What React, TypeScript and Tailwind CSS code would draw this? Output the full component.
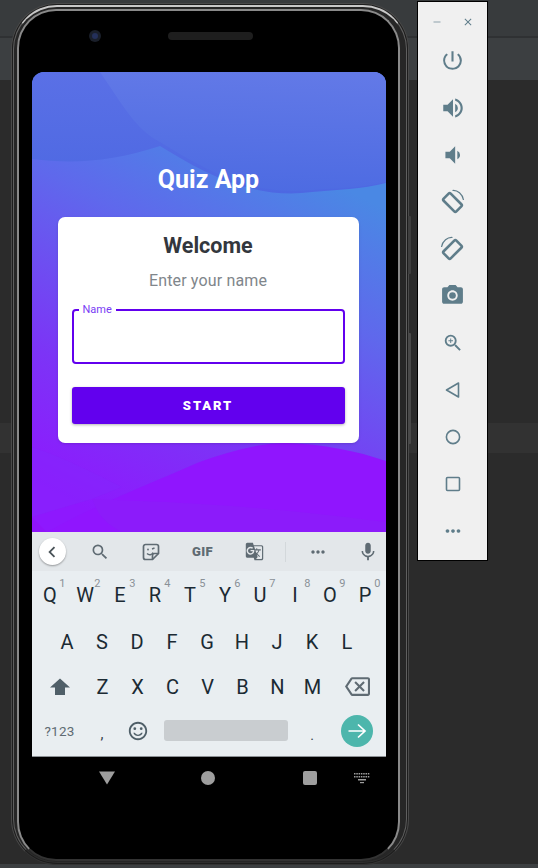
import React from "react";
import { MdPowerSettingsNew, MdVolumeUp, MdVolumeDown, MdPhotoCamera, MdZoomIn, MdMoreHoriz, MdSearch, MdGTranslate, MdMic, MdClose, MdRemove, MdChevronLeft, MdOutlineBackspace, MdOutlineSentimentSatisfied } from "react-icons/md";

function Rotate({ flip }: { flip?: boolean }) {
  return (
    <svg width="25" height="25" viewBox="0 0 25 25" fill="none" stroke="#5f7d8a" className={flip ? "-scale-x-100" : ""}>
      <rect x="7.5" y="4.500" width="10" height="18" rx="1.500" strokeWidth="2.600" transform="rotate(-45 12.500 13.500)" />
      <path d="M12.500 1.500 C17.500 1 22.500 5 23.500 11" strokeWidth="1.200" />
    </svg>
  );
}

function Side() {
  return (
    <div className="mt-[1px] ml-[8px] flex h-[560px] w-[71px] flex-col items-center border border-black bg-[#f0f0f0] text-[#5f7d8a]">
      <div className="flex h-[35px] w-full items-center justify-between pt-[5px] pr-[13px] pl-[13px]">
        <MdRemove size={12} className="text-[#8fa3ad]" />
        <MdClose size={12} />
      </div>
      <div className="flex flex-col items-center">
        {[
          <MdPowerSettingsNew size={25} key="p" />,
          <MdVolumeUp size={26} key="u" />,
          <MdVolumeDown size={26} key="d" />,
          <Rotate key="r1" />,
          <Rotate flip key="r2" />,
          <MdPhotoCamera size={25} key="c" />,
          <MdZoomIn size={22} key="z" />,
          <svg key="b" width="18" height="18" viewBox="0 0 18 18" fill="none" stroke="#5f7d8a" strokeWidth="1.600" strokeLinejoin="round"><path d="M14.500 2 L2.500 9 L14.500 16 Z" /></svg>,
          <svg key="h" width="18" height="18" viewBox="0 0 18 18" fill="none" stroke="#5f7d8a" strokeWidth="1.600"><circle cx="9" cy="9" r="6.600" /></svg>,
          <svg key="s" width="18" height="18" viewBox="0 0 18 18" fill="none" stroke="#5f7d8a" strokeWidth="1.600"><rect x="2.500" y="2.500" width="13" height="13" rx="1" /></svg>,
          <MdMoreHoriz size={22} key="m" />,
        ].map((icon, i) => (
          <div key={i} className="flex h-[47px] w-[46px] items-center justify-center">{icon}</div>
        ))}
      </div>
    </div>
  );
}

function Waves() {
  return (
    <svg className="absolute inset-0 h-full w-full" viewBox="0 0 354 460" preserveAspectRatio="none">
      <defs>
        <linearGradient id="base" gradientUnits="userSpaceOnUse" x1="300" y1="110" x2="120" y2="470">
          <stop offset="0" stopColor="#4a88e4" />
          <stop offset="0.3" stopColor="#5f68ec" />
          <stop offset="0.7" stopColor="#7c34f6" />
          <stop offset="1" stopColor="#8e18fe" />
        </linearGradient>
        <linearGradient id="topdark" x1="0" y1="0" x2="0" y2="1">
          <stop offset="0" stopColor="#5a70e6" />
          <stop offset="1" stopColor="#4d68e2" />
        </linearGradient>
        <linearGradient id="toplight" x1="0.6" y1="0" x2="0.5" y2="1">
          <stop offset="0" stopColor="#6279e7" />
          <stop offset="1" stopColor="#4d6be2" />
        </linearGradient>
      </defs>
      <rect width="354" height="460" fill="url(#base)" />
      <path d="M0 87 C40 92 80 90 128 74 C170 100 220 128 280 120 C305 118 330 117 354 111 L354 0 L0 0 Z" fill="url(#topdark)" />
      <path d="M68 0 C90 32 104 58 128 70 C170 96 220 125 280 118 C305 116 330 116 354 110 L354 0 Z" fill="url(#toplight)" />
      <path d="M15 460 C60 435 110 415 165 391 C195 380 225 371 255 371 C290 372 325 379 354 389 L354 460 Z" fill="#9015fe" />
      <path d="M0 445 L15 460 L0 460 Z" fill="#8f14fa" />
      <path d="M60 427 C120 430 200 430 354 450 L354 460 L90 460 C70 450 65 440 60 427 Z" fill="#8c1bfa" />
      <path d="M0 375 C30 385 60 400 90 415 L60 427 L0 445 Z" fill="#8426fc" opacity="0.5" />
    </svg>
  );
}

function Card() {
  return (
    <div className="relative mr-[27px] ml-[26px] flex h-[226px] flex-col items-center rounded-[7px] bg-white px-[14px] shadow-sm">
      <h2 className="mt-[14px] text-[21.500px] leading-[30px] font-bold text-[#33373d]">Welcome</h2>
      <p className="mt-[8px] text-[16px] leading-[24px] tracking-[0.15px] text-[#80868b]">Enter your name</p>
      <div className="relative mt-[16px] h-[55px] w-full rounded-[4px] border-2 border-[#6200ee]">
        <span className="absolute top-[-8px] left-[5px] bg-white px-[4px] text-[11px] leading-[13px] text-[#7a3cf5]">Name</span>
      </div>
      <button className="mt-[23px] flex h-[37px] w-full items-center justify-center rounded-[3px] bg-[#6200ee] text-[13px] font-black tracking-[1.900px] text-white shadow-[0_1px_3px_rgba(0,0,0,0.3)]">START</button>
    </div>
  );
}

function Key({ c, n }: { c: string; n?: string }) {
  return (
    <div className="relative flex h-full w-[35px] shrink-0 items-center justify-center pt-[1px] text-[20px] text-[#1b2a33]">
      {c}
      {n && <span className="absolute top-[6px] right-[2px] text-[11px] leading-[13px] text-[#8a9197]">{n}</span>}
    </div>
  );
}

function Keyboard() {
  const row1 = "QWERTYUIOP".split("");
  return (
    <div className="flex h-[225px] flex-col bg-[#e9eef1]">
      <div className="flex h-[39px] items-center bg-[#e3e7ea] text-[#5f6b73]">
        <div className="ml-[7px] flex h-[27px] w-[27px] items-center justify-center rounded-full bg-white shadow-[0_1px_2px_rgba(0,0,0,0.35)]">
          <MdChevronLeft size={22} className="text-[#4a5358]" />
        </div>
        <MdSearch size={20} className="ml-[24px]" />
        <svg className="ml-[32px]" width="18" height="18" viewBox="0 0 18 18" fill="none" stroke="#5f6b73" strokeWidth="1.700"><path d="M3.500 1.500h11a2 2 0 0 1 2 2v7l-6 6h-7a2 2 0 0 1-2-2v-11a2 2 0 0 1 2-2z" /><path d="M10.500 16.500v-4a2 2 0 0 1 2-2h4" /><path d="M5 10.500c2 2 5 1.500 6-1" strokeWidth="1.400" /><circle cx="6" cy="6.500" r="0.900" fill="#5f6b73" stroke="none" /><path d="M10 6l2.500-1" strokeWidth="1.400" /></svg>
        <span className="ml-[30px] w-[26px] text-center text-[13px] font-black tracking-[0.4px]">GIF</span>
        <MdGTranslate size={19} className="ml-[29px]" />
        <div className="ml-[21px] h-[20px] w-px bg-[#d3d8db]" />
        <MdMoreHoriz size={20} className="ml-[22px]" />
        <MdMic size={22} className="ml-[29px]" />
      </div>
      <div className="flex h-[47px] pl-[1px]">
        {row1.map((c, i) => <Key key={c} c={c} n={String((i + 1) % 10)} />)}
      </div>
      <div className="flex h-[46px] pl-[18px]">
        {"ASDFGHJKL".split("").map((c) => <Key key={c} c={c} />)}
      </div>
      <div className="flex h-[45px] items-center">
        <div className="flex h-full w-[53.500px] items-center justify-center pl-[3px]">
          <svg width="22" height="20" viewBox="0 0 22 20" fill="#4f5f68"><path d="M11 1.500 L21 10.500 L16 10.500 L16 18 L6 18 L6 10.500 L1 10.500 Z" /></svg>
        </div>
        {"ZXCVBNM".split("").map((c) => <Key key={c} c={c} />)}
        <div className="flex h-full w-[55px] items-center justify-center">
          <MdOutlineBackspace size={25} className="text-[#5f6b73]" />
        </div>
      </div>
      <div className="flex flex-1 items-center border-b border-[#8b9094] pb-[4px]">
        <div className="flex w-[53px] items-center justify-center pt-[2px] pl-[3px] text-[13.500px] tracking-[0.2px] text-[#5f6b73]">?123</div>
        <div className="flex w-[35px] justify-center pt-[6px] text-[15px] leading-[20px] text-[#37444c]">,</div>
        <div className="flex w-[35px] justify-center pl-[1px]"><MdOutlineSentimentSatisfied size={22} className="text-[#4f5f68]" /></div>
        <div className="ml-[9px] h-[21px] w-[124px] rounded-[3px] bg-[#c9cdd0]" />
        <div className="ml-[7px] flex w-[35px] justify-center pt-[8px] text-[14px] leading-[20px] text-[#37444c]">.</div>
        <div className="ml-[11px] flex h-[32px] w-[32px] items-center justify-center rounded-full bg-[#4db6ac]">
          <svg width="20" height="16" viewBox="0 0 20 16" fill="none" stroke="#fff" strokeWidth="1.700"><path d="M1.500 8 H18 M11 1.500 L18 8 L11 14.500" /></svg>
        </div>
      </div>
    </div>
  );
}

function NavBar() {
  return (
    <div className="flex h-[42px] items-center pb-[1px]">
      <svg className="ml-[67px]" width="16" height="14" viewBox="0 0 16 14" fill="#9e9e9e"><path d="M0 0.500 H16 L8 13.500 Z" /></svg>
      <div className="ml-[86px] h-[14px] w-[14px] rounded-full bg-[#9e9e9e]" />
      <div className="ml-[88px] h-[14px] w-[14px] rounded-[2px] bg-[#9e9e9e]" />
      <svg className="ml-[36px]" width="18" height="12" viewBox="0 0 18 12" fill="#9e9e9e">
        {[0, 1, 2, 3, 4, 5, 6].map((i) => <rect key={`a${i}`} x={1 + i * 2.3} y="1" width="1.500" height="1.500" />)}
        {[0, 1, 2, 3, 4, 5, 6].map((i) => <rect key={`b${i}`} x={1 + i * 2.3} y="4" width="1.500" height="1.500" />)}
        <rect x="5" y="7" width="8" height="1.500" />
        <rect x="7" y="10" width="4" height="1.200" />
      </svg>
    </div>
  );
}

function Phone() {
  return (
    <div className="relative mt-[3px] ml-[11px] h-[862px] w-[398px] shrink-0 rounded-[46px] border border-[#4a4a4a] border-b-[#333333] bg-[#1d1d1d] p-[1px]">
      <div className="absolute top-[212px] right-[-3px] h-[58px] w-[3px] rounded-r-[1px] bg-[#3f3f3f]" />
      <div className="absolute top-[329px] right-[-3px] h-[111px] w-[3px] rounded-r-[1px] bg-[#4a4a4a]" />
      <div className="h-full rounded-[44px] border border-t-2 border-[#5f5f5f] border-t-[#c8c8c8] border-b-[#2e2e2e] bg-[#262626] pt-[2px] pr-[6px] pb-[1px] pl-[3px]">
        <div className="flex h-full flex-col items-center rounded-[39px] border-2 border-[#8a8a8a] border-b-[#333333] bg-black">
          <div className="relative flex h-[61px] w-[354px] shrink-0 items-start">
            <div className="mt-[19px] ml-[57px] h-[12px] w-[12px] rounded-full bg-[#1a1f2a] p-[3px]"><div className="h-full w-full rounded-full bg-[#24305a]" /></div>
            <div className="mt-[21px] ml-[67px] h-[8px] w-[85px] rounded-full bg-[#1e1e1e]" />
          </div>
          <div className="w-[354px] shrink-0">
            <div className="relative h-[460px] overflow-hidden rounded-t-[12px]">
              <Waves />
              <div className="relative">
                <h1 className="pt-[92px] text-center text-[25px] leading-[32px] font-bold text-white">Quiz App</h1>
                <div className="mt-[21px]"><Card /></div>
              </div>
            </div>
            <Keyboard />
            <NavBar />
          </div>
        </div>
      </div>
    </div>
  );
}

export default function App() {
  return (
    <div className="flex h-[868px] w-[538px] items-start overflow-hidden bg-[linear-gradient(to_bottom,#383b3d_0,#383b3d_36px,#2f3133_36px,#2f3133_38px,#3c3f41_38px,#3c3f41_80px,#2b2b2b_80px,#2b2b2b_423px,#323232_423px,#323232_453px,#2b2b2b_453px,#2b2b2b_864px,#3c3f41_864px)] [font-family:Roboto,sans-serif]">
      <Phone />
      <Side />
    </div>
  );
}
